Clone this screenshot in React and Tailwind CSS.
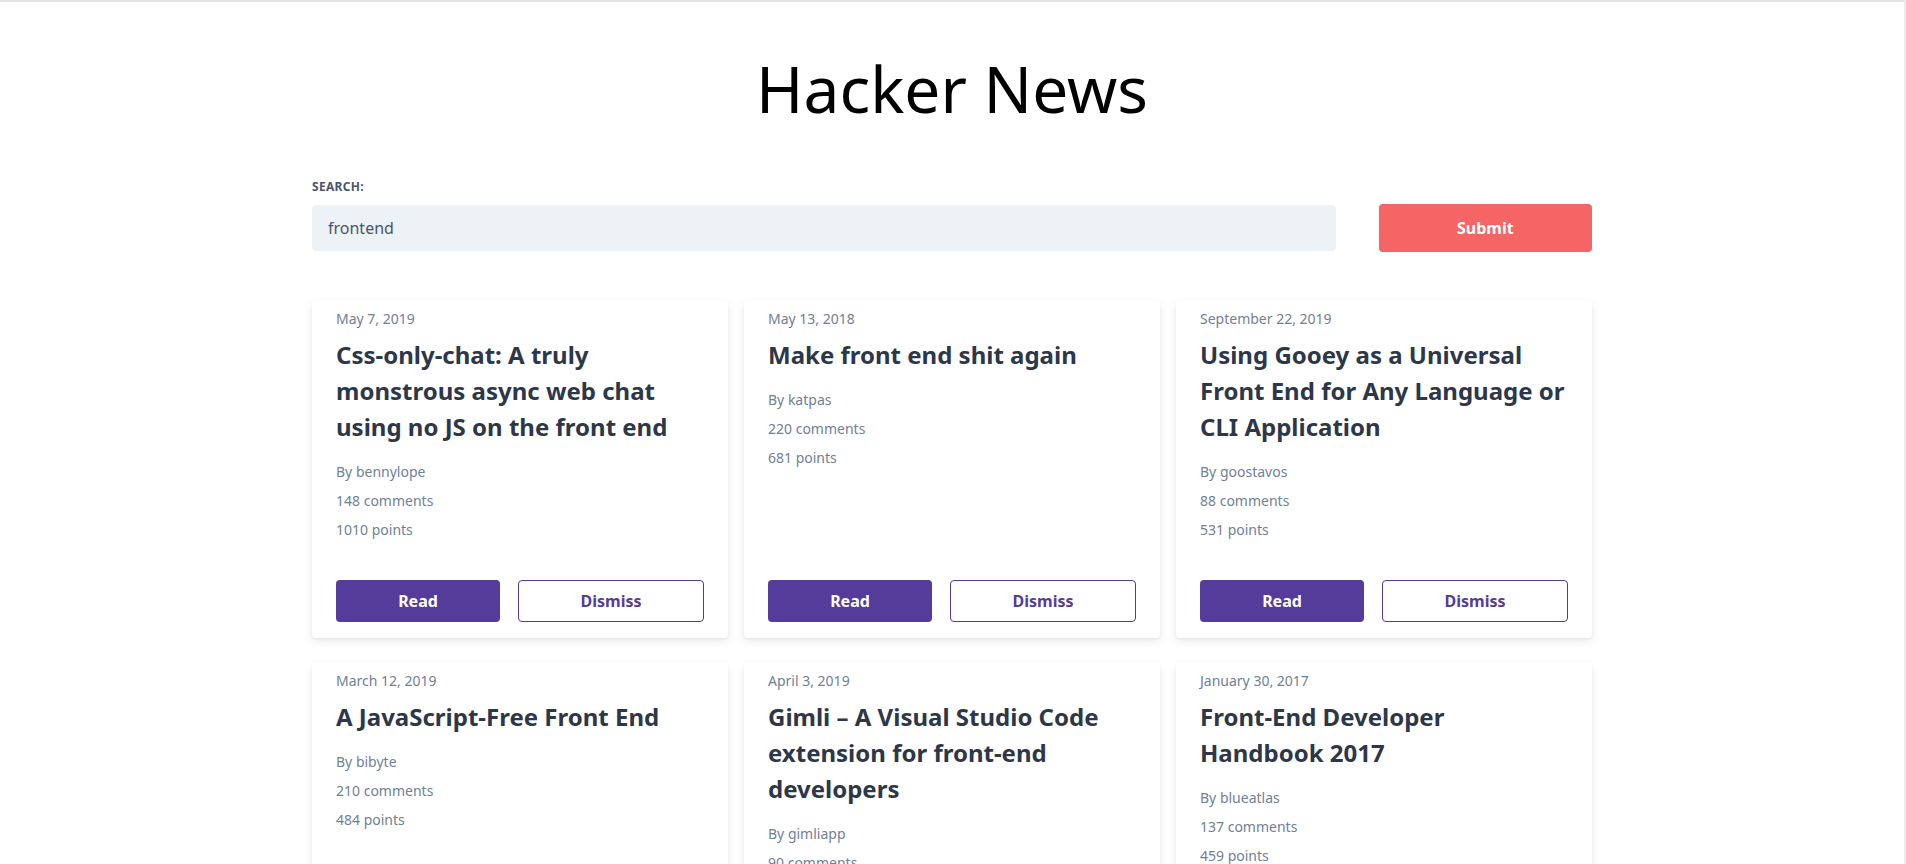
import React from 'react';

const stories = [
  { date: 'May 7, 2019', title: 'Css-only-chat: A truly monstrous async web chat using no JS on the front end', author: 'bennylope', comments: 148, points: 1010 },
  { date: 'May 13, 2018', title: 'Make front end shit again', author: 'katpas', comments: 220, points: 681 },
  { date: 'September 22, 2019', title: 'Using Gooey as a Universal Front End for Any Language or CLI Application', author: 'goostavos', comments: 88, points: 531 },
  { date: 'March 12, 2019', title: 'A JavaScript-Free Front End', author: 'bibyte', comments: 210, points: 484 },
  { date: 'April 3, 2019', title: 'Gimli – A Visual Studio Code extension for front-end developers', author: 'gimliapp', comments: 90, points: 442 },
  { date: 'January 30, 2017', title: 'Front-End Developer Handbook 2017', author: 'blueatlas', comments: 137, points: 459 },
];

const StoryCard = ({ story }) => (
  <div className="flex flex-col bg-white rounded shadow-[0_4px_10px_rgba(0,0,0,0.08),0_1px_3px_rgba(0,0,0,0.05)] px-6 pt-2 pb-4">
    <p className="text-sm leading-[21px] text-[#718096] mb-2">{story.date}</p>
    <h2 className="text-2xl leading-9 font-bold text-[#2d3748] mb-4">{story.title}</h2>
    <p className="text-sm leading-[21px] text-[#718096] mb-2">By {story.author}</p>
    <p className="text-sm leading-[21px] text-[#718096] mb-2">{story.comments} comments</p>
    <p className="text-sm leading-[21px] text-[#718096]">{story.points} points</p>
    <div className="mt-auto pt-10 flex justify-between">
      <button className="w-[164px] h-[42px] rounded bg-[#553c9a] text-white font-bold text-base">
        Read
      </button>
      <button className="w-[186px] h-[42px] rounded border border-[#553c9a] bg-white text-[#553c9a] font-bold text-base">
        Dismiss
      </button>
    </div>
  </div>
);

export default function App() {
  return (
    <div className="min-h-screen bg-white border-t-2 border-[#e3e3e3] border-r-2 border-r-[#ececec] font-['Noto_Sans',sans-serif]">
      <div className="max-w-[1280px] mx-auto pt-[39px] pb-16">
        <h1 className="text-center text-[64px] leading-[96px] font-normal text-black">Hacker News</h1>

        <div className="mt-[41px]">
          <label className="block text-xs leading-[18px] font-bold uppercase tracking-wide text-[#4a5568] mb-2">
            Search:
          </label>
          <div className="flex items-center justify-between">
            <input
              type="text"
              defaultValue="frontend"
              className="w-4/5 h-[46px] rounded bg-[#edf2f7] px-4 text-base text-[#4a5568] outline-none"
            />
            <button className="w-1/6 h-[48px] rounded bg-[#f56565] text-white font-bold text-base">
              Submit
            </button>
          </div>
        </div>

        <div className="mt-12 grid grid-cols-3 gap-x-4 gap-y-6">
          {stories.map((s) => (
            <StoryCard key={s.title} story={s} />
          ))}
        </div>
      </div>
    </div>
  );
}
